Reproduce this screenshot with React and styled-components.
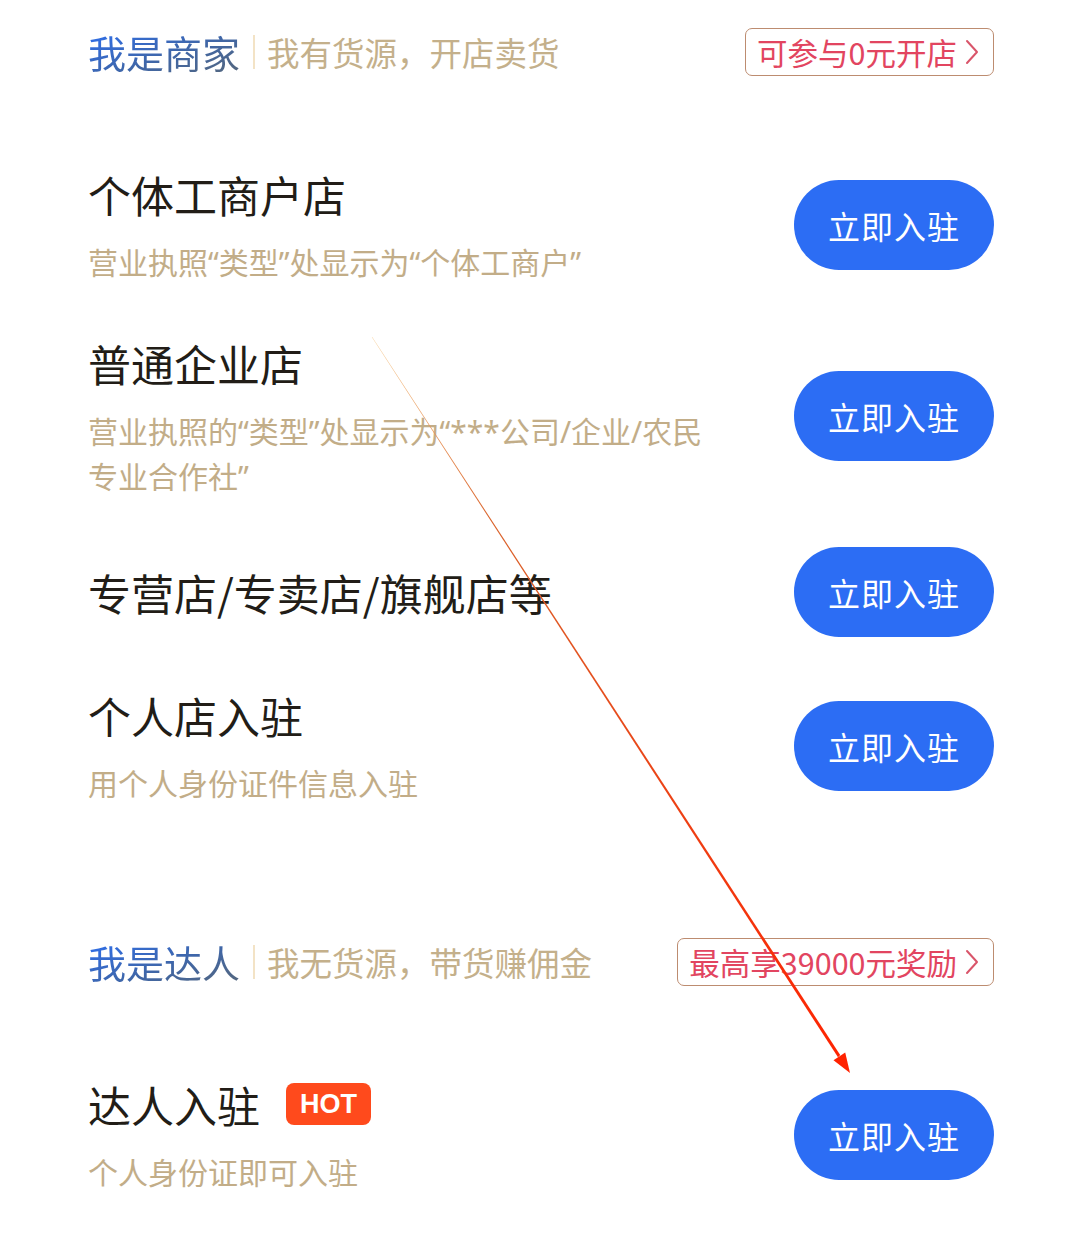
import React from 'react'
import styled, { createGlobalStyle } from 'styled-components'

const GlobalStyle = createGlobalStyle`
  html, body {
    margin: 0;
    padding: 0;
    background: #ffffff;
  }
  body {
    font-family: "Noto Sans CJK SC", "Noto Sans", sans-serif;
  }
`

const Page = styled.div`
  position: relative;
  width: 1080px;
  min-height: 1246px;
  box-sizing: border-box;
  padding: 28px 86px 0 88px;
  background: #fff;
  overflow: hidden;
`

const Section = styled.section`
  display: flex;
  flex-direction: column;
  margin-bottom: ${props => props.$after || 0}px;
`

const SectionHeader = styled.div`
  display: flex;
  align-items: center;
  height: 48px;
  margin-bottom: 88px;
`

const Role = styled.span`
  font-size: 38px;
  line-height: 48px;
  background: linear-gradient(160deg, #2d6ff0 0%, #3f66a8 55%, #56677a 100%);
  -webkit-background-clip: text;
  background-clip: text;
  color: transparent;
`

const Divider = styled.span`
  width: 2px;
  height: 34px;
  margin: 0 12px 0 13px;
  background: #f3e3c6;
`

const Slogan = styled.span`
  font-size: 32.5px;
  line-height: 48px;
  color: #c4b08b;
  flex: 1;
`

const Badge = styled.div`
  display: flex;
  align-items: center;
  height: 48px;
  box-sizing: border-box;
  padding: 0 14px 0 11px;
  border: 1.5px solid #bd8c70;
  border-radius: 7px;
  color: #e24560;
  font-size: 30.5px;
  gap: 8px;
`

const Chevron = styled.svg`
  width: 14px;
  height: 26px;
  flex-shrink: 0;
`

const List = styled.div`
  display: flex;
  flex-direction: column;
  gap: 48px;
`

const Row = styled.div`
  display: flex;
  align-items: center;
  justify-content: space-between;
`

const Info = styled.div`
  display: flex;
  flex-direction: column;
  gap: 16px;
  max-width: 622px;
`

const TitleLine = styled.div`
  display: flex;
  align-items: center;
`

const Title = styled.h2`
  margin: 0;
  font-size: 43px;
  line-height: 60px;
  font-weight: 400;
  color: #221d17;
`

const Hot = styled.span`
  margin-left: 26px;
  height: 42px;
  padding: 0 14px;
  display: inline-flex;
  align-items: center;
  border-radius: 8px;
  background: #ff4a1c;
  color: #fff;
  font-family: "Liberation Sans", Arial, sans-serif;
  font-weight: 700;
  font-size: 27px;
`

const Desc = styled.p`
  margin: 0;
  font-family: "Noto Sans", "Noto Sans CJK SC", sans-serif;
  font-size: 30px;
  line-height: 45px;
  color: #c2ad88;
`

const JoinButton = styled.button`
  flex-shrink: 0;
  width: 200px;
  height: 90px;
  border: none;
  border-radius: 45px;
  background: #2c6df4;
  color: #fff;
  font-family: "Noto Sans CJK SC", sans-serif;
  font-size: 32px;
  letter-spacing: 1px;
  cursor: pointer;
`

const Overlay = styled.svg`
  position: absolute;
  left: 0;
  top: 0;
  width: 1080px;
  height: 1246px;
  pointer-events: none;
`

const ArrowRight = () => (
  <Chevron viewBox="0 0 14 26">
    <path d="M2 2 L12 13 L2 24" fill="none" stroke="#d9556a" strokeWidth="2" strokeLinecap="round" strokeLinejoin="round" />
  </Chevron>
)

const merchants = [
  { title: '个体工商户店', desc: '营业执照“类型”处显示为“个体工商户”' },
  { title: '普通企业店', desc: '营业执照的“类型”处显示为“***公司/企业/农民专业合作社”' },
  { title: '专营店/专卖店/旗舰店等' },
  { title: '个人店入驻', desc: '用个人身份证件信息入驻' },
]

const Item = ({ title, desc, hot }) => (
  <Row>
    <Info>
      <TitleLine>
        <Title>{title}</Title>
        {hot && <Hot>HOT</Hot>}
      </TitleLine>
      {desc && <Desc>{desc}</Desc>}
    </Info>
    <JoinButton>立即入驻</JoinButton>
  </Row>
)

const App = () => {
  return (
    <Page>
      <GlobalStyle />
      <Section $after={132}>
        <SectionHeader>
          <Role>我是商家</Role>
          <Divider />
          <Slogan>我有货源，开店卖货</Slogan>
          <Badge>可参与0元开店<ArrowRight /></Badge>
        </SectionHeader>
        <List>
          {merchants.map(m => <Item key={m.title} {...m} />)}
        </List>
      </Section>
      <Section>
        <SectionHeader>
          <Role>我是达人</Role>
          <Divider />
          <Slogan>我无货源，带货赚佣金</Slogan>
          <Badge>最高享39000元奖励<ArrowRight /></Badge>
        </SectionHeader>
        <List>
          <Item title="达人入驻" desc="个人身份证即可入驻" hot />
        </List>
      </Section>
      <Overlay viewBox="0 0 1080 1246">
        <defs>
          <linearGradient id="arrowFade" x1="372" y1="337" x2="850" y2="1073" gradientUnits="userSpaceOnUse">
            <stop offset="0" stopColor="#f6c98a" />
            <stop offset="0.25" stopColor="#d9622a" />
            <stop offset="1" stopColor="#ff2200" />
          </linearGradient>
        </defs>
        <polygon points="372.2,336.9 371.8,337.1 838.0,1057.3 840.2,1055.1" fill="url(#arrowFade)" />
        <polygon points="850,1073 833.5,1060.2 845.2,1052.6" fill="#ff2200" />
      </Overlay>
    </Page>
  )
}

export default App
